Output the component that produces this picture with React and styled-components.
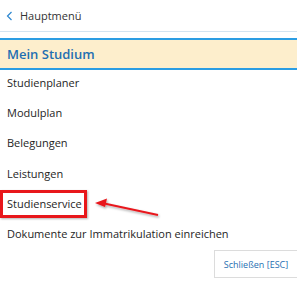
import React from 'react'
import styled, { createGlobalStyle } from 'styled-components'

const Global = createGlobalStyle`
  body {
    margin: 0;
    background: #fff;
    font-family: "Open Sans", "Liberation Sans", sans-serif;
  }
`

const Panel = styled.div`
  width: 297px;
  height: 282px;
  position: relative;
  overflow: hidden;
`

const Back = styled.div`
  display: flex;
  align-items: center;
  gap: 7px;
  height: 31px;
  padding-left: 6px;
  border-bottom: 1px solid #d3e4f1;
  font-size: 11px;
  color: #333;

  svg {
    width: 7px;
    height: 10px;
  }
`

const Title = styled.div`
  margin-top: 6px;
  height: 28px;
  display: flex;
  align-items: center;
  padding-left: 7px;
  background: #fdeecc;
  border-top: 2px solid #2b9de3;
  border-bottom: 2px solid #2b9de3;
  font-size: 13px;
  font-weight: 600;
  color: #1f6fb2;
`

const List = styled.ul`
  list-style: none;
  margin: 0;
  padding: 0;
`

const Item = styled.li`
  position: relative;
  height: 30.2px;
  line-height: 26px;
  padding-left: 7px;
  font-size: 11px;
  color: #1e1e1e;
`

const Highlight = styled.span`
  position: absolute;
  left: 0;
  top: -1px;
  width: 87px;
  height: 28px;
  box-sizing: border-box;
  border: 3px solid #e8171b;
  box-shadow: 1px 1px 2px rgba(0, 0, 0, 0.3);
`

const Arrow = styled.svg`
  position: absolute;
  left: 90px;
  top: 193px;
  overflow: visible;
`

const Footer = styled.div`
  display: flex;
  justify-content: flex-end;
  margin-top: -1px;
`

const Button = styled.button`
  width: 83px;
  height: 28px;
  border: 1px solid #dcdcdc;
  border-right: none;
  background: #fff;
  font-family: inherit;
  font-size: 9px;
  color: #1f6fb2;
  padding: 0;
  cursor: pointer;
`

const items = [
  'Studienplaner',
  'Modulplan',
  'Belegungen',
  'Leistungen',
  'Studienservice',
  'Dokumente zur Immatrikulation einreichen'
]

export default function App () {
  return (
    <Panel>
      <Global />
      <Back>
        <svg viewBox='0 0 7 10'>
          <path d='M5.5 1 L1.5 5 L5.5 9' fill='none' stroke='#2b86d0' strokeWidth='1.2' />
        </svg>
        Hauptmenü
      </Back>
      <Title>Mein Studium</Title>
      <List>
        {items.map(name => (
          <Item key={name}>
            {name === 'Studienservice' && <Highlight />}
            {name}
          </Item>
        ))}
      </List>
      <Footer>
        <Button>Schließen [ESC]</Button>
      </Footer>
      <Arrow width='80' height='30'>
        <defs>
          <filter id='sh' x='-20%' y='-50%' width='140%' height='200%'>
            <feDropShadow dx='1' dy='1.5' stdDeviation='1' floodColor='#000' floodOpacity='0.35' />
          </filter>
        </defs>
        <g filter='url(#sh)'>
          <line x1='68' y1='22' x2='12' y2='10' stroke='#e8171b' strokeWidth='1.8' />
          <path d='M5 10 L17 5.5 L15 14 Z' fill='#e8171b' />
        </g>
      </Arrow>
    </Panel>
  )
}
